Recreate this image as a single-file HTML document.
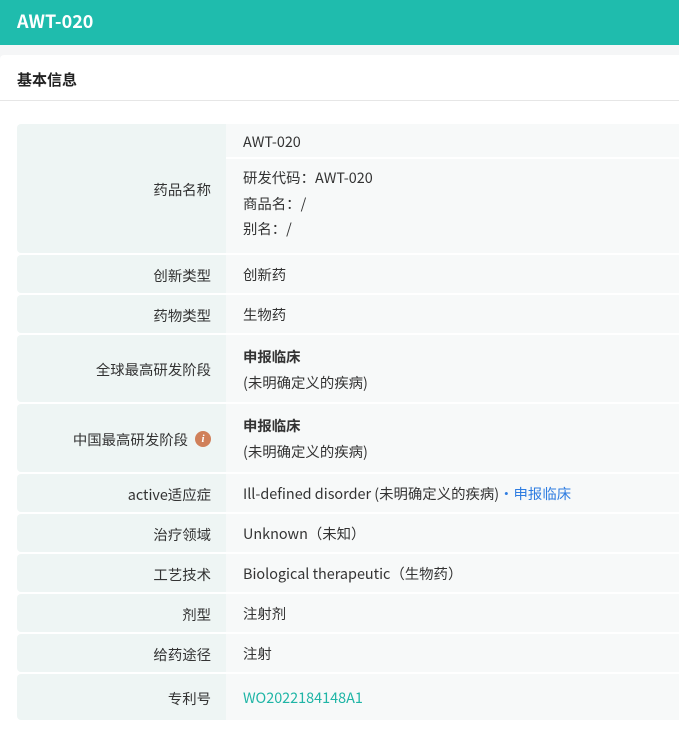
<!DOCTYPE html>
<html><head><meta charset="utf-8"><style>
*{margin:0;padding:0;box-sizing:border-box}
body{width:679px;height:734px;background:#f5f6f7;font-family:"Noto Sans CJK SC",sans-serif;color:#333;font-size:14.4px;position:relative;overflow:hidden}
.hd{position:absolute;left:0;top:0;width:679px;height:45px;background:#1fbcad;color:#fff;font-weight:bold;font-size:18px;line-height:42px;padding-left:17px}
.card{position:absolute;left:0;top:55px;width:679px;height:679px;background:#fff;border-radius:4px 0 0 0}
.tt{position:absolute;left:17px;top:68px;font-weight:bold;font-size:15px;line-height:24px;color:#222}
.sep{position:absolute;left:0;top:100px;width:679px;height:1px;background:#e6e6e6}
.r{position:absolute;left:17px;width:662px;z-index:1}
.r::before{content:"";position:absolute;left:0;top:0;bottom:0;width:209px;background:#eef5f4;border-radius:4px 0 0 4px;z-index:0}
.r::after{content:"";position:absolute;left:209px;top:0;bottom:0;right:0;background:#f7f9f9;z-index:0}
.l{position:absolute;left:0;top:1px;bottom:-1px;width:209px;text-align:right;padding-right:15px;display:flex;align-items:center;justify-content:flex-end;z-index:2}
.v{position:absolute;left:209px;top:1px;bottom:-1px;right:0;padding-left:17px;display:flex;flex-direction:column;justify-content:center;line-height:26px;z-index:2}
b{font-weight:bold}
.i{display:inline-block;width:16px;height:16px;border-radius:50%;background:#d0805a;color:#fff;font-size:11px;font-style:italic;font-family:"Liberation Serif",serif;font-weight:bold;text-align:center;line-height:16px;margin-left:7px}
</style></head><body>
<div class="hd">AWT-020</div>
<div class="card"></div>
<div class="tt">基本信息</div>
<div class="sep"></div>

<div class="r" style="top:124px;height:129px">
<div class="l">药品名称</div>
<div style="position:absolute;left:209px;right:0;top:33px;height:2px;background:#fff;z-index:2"></div>
<div style="position:absolute;left:226px;top:1px;line-height:34px;z-index:2">AWT-020</div>
<div style="position:absolute;left:226px;top:41px;line-height:25.5px;z-index:2">研发代码：AWT-020<br>商品名：/<br>别名：/</div>
</div>

<div class="r" style="top:255px;height:38px"><div class="l">创新类型</div><div class="v">创新药</div></div>
<div class="r" style="top:295px;height:38px"><div class="l">药物类型</div><div class="v">生物药</div></div>
<div class="r" style="top:335px;height:67px"><div class="l">全球最高研发阶段</div><div class="v"><b>申报临床</b><span>(未明确定义的疾病)</span></div></div>
<div class="r" style="top:404px;height:68px"><div class="l">中国最高研发阶段<span class="i">i</span></div><div class="v"><b>申报临床</b><span>(未明确定义的疾病)</span></div></div>
<div class="r" style="top:474px;height:38px"><div class="l">active适应症</div><div class="v"><span>Ill-defined disorder (未明确定义的疾病)<span style="color:#2f7de1">•申报临床</span></span></div></div>
<div class="r" style="top:514px;height:38px"><div class="l">治疗领域</div><div class="v">Unknown（未知）</div></div>
<div class="r" style="top:554px;height:38px"><div class="l">工艺技术</div><div class="v">Biological therapeutic（生物药）</div></div>
<div class="r" style="top:594px;height:38px"><div class="l">剂型</div><div class="v">注射剂</div></div>
<div class="r" style="top:634px;height:38px"><div class="l">给药途径</div><div class="v">注射</div></div>
<div class="r" style="top:674px;height:46px"><div class="l">专利号</div><div class="v" style="color:#1fb5a6">WO2022184148A1</div></div>
</body></html>
